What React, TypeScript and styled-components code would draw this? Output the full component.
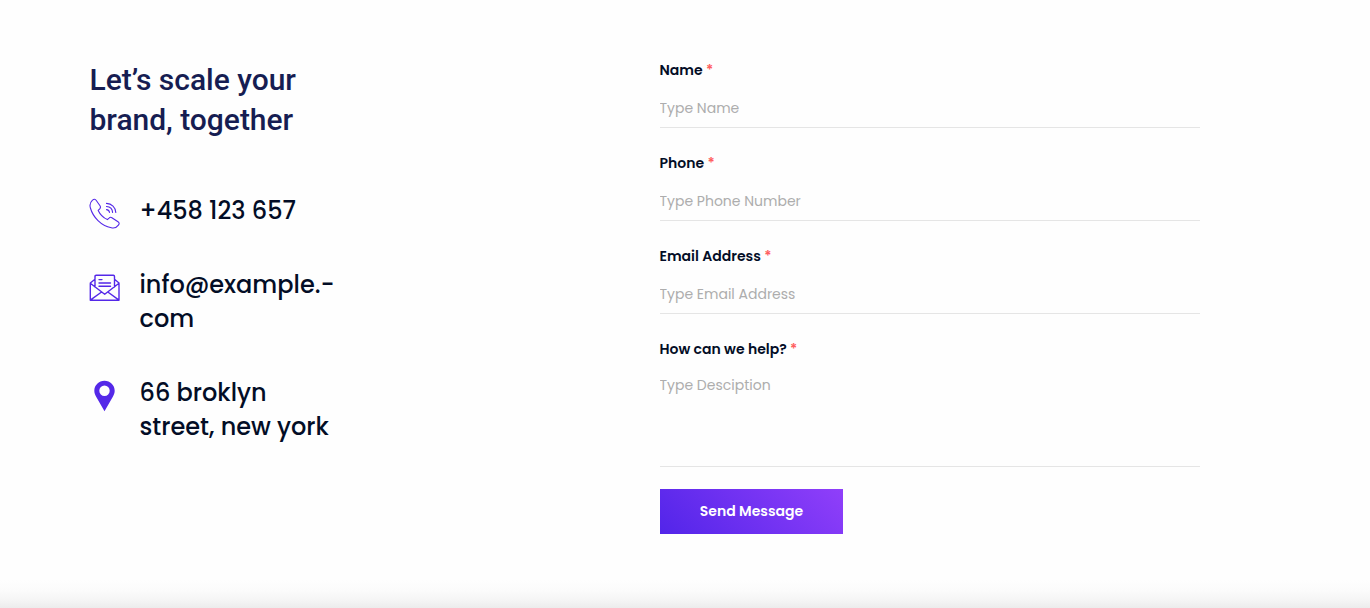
import React from 'react';
import styled, { createGlobalStyle } from 'styled-components';

const GlobalStyle = createGlobalStyle`
  * { box-sizing: border-box; }
  body { margin: 0; background: #fefefe; overflow: hidden; }
`;

const font = `Poppins, Inter, 'Noto Sans', sans-serif`;

const Page = styled.main`
  height: 608px;
  padding: 60px 170px 0 89.5px;
  display: grid;
  grid-template-columns: 250px 540px;
  justify-content: space-between;
  align-items: start;
  color: #030d26;
  font-family: ${font};
  background: linear-gradient(to bottom, #fefefe 580px, #fbfbfb 591px, #f5f5f5 600px, #ececec 608px);
`;

const Heading = styled.h2`
  margin: 0 0 54px;
  font: 500 30px/40px Roboto, sans-serif;
  letter-spacing: -0.02px;
  color: #161d52;
`;

const ContactList = styled.ul`
  list-style: none;
  margin: 0;
  padding: 0;
  display: flex;
  flex-direction: column;
  gap: 40px;
`;

const ContactItem = styled.li`
  display: flex;
  gap: 19.5px;
  svg { flex: none; margin: 4px -1px -2px -0.5px; }
`;

const Line = styled.span`
  display: block;
  font-size: 24px;
  line-height: 34px;
  font-weight: 500;
  white-space: nowrap;
`;

const Form = styled.form`
  display: flex;
  flex-direction: column;
  align-items: flex-start;
`;

const Field = styled.label<{ $last?: boolean }>`
  display: flex;
  flex-direction: column;
  width: 100%;
  margin-bottom: ${(p) => (p.$last ? 22 : 25)}px;
`;

const Caption = styled.span`
  font-size: 14px;
  line-height: 20px;
  font-weight: 600;
  margin-left: -0.5px;
`;

const Star = styled.span`
  color: #ff5e5e;
`;

const control = `
  display: block;
  width: 100%;
  margin: 0;
  border: 0;
  border-bottom: 1px solid #e5e5e5;
  border-radius: 0;
  outline: 0;
  background: transparent;
  color: #030d26;
  font: 400 14px/22px ${font};
  resize: none;
  text-indent: -0.5px;
  &::placeholder { color: #adadad; opacity: 1; }
`;

const Input = styled.input`
  ${control}
  height: 48px;
  padding: 9px 0 0;
`;

const TextArea = styled.textarea`
  ${control}
  height: 108px;
  padding: 15px 0 0;
  overflow: hidden;
`;

const Submit = styled.button`
  width: 183px;
  height: 45px;
  border: 0;
  padding: 0 0 2px;
  color: #fff;
  font: 600 14px/20px ${font};
  background: linear-gradient(45deg, #5225e9, #903ffa);
`;

const PhoneIcon = () => (
  <svg width="32" height="32" viewBox="0 0 32 32" fill="none" stroke="#5428e8" strokeWidth="1.1" strokeLinecap="round" strokeLinejoin="round">
    <path d="M3.300 2.300C5 .9 6.300 1 7.300 2.500l3.700 5.300c.8 1.200.5 2.100-.3 3l-1.500 1.600c2 4.300 5.400 7.400 9.200 9.200l1.600-1.500c.9-.9 1.800-1.100 2.900-.4l6.100 4.100c1.400.9 1.500 2 .4 3.300-1.700 2.300-3.900 3.500-7.100 2.700C12.100 27.900 4 19.200 1.400 10 .5 6.900 1.100 4.300 3.300 2.300Z" />
    <path d="M17.500 5.400c5.200.2 9.100 4.100 9.300 9M17.500 8.500c3.500.2 5.900 2.600 6.100 5.900M17.500 11.600c1.800.2 2.800 1.200 3 2.800" />
  </svg>
);

const MailIcon = () => (
  <svg width="32" height="32" viewBox="0 0 32 32" fill="none" stroke="#5428e8" strokeWidth="1.4" strokeLinecap="round" strokeLinejoin="round">
    <path d="M6 7.300 1.300 11v17.300h28.700V11l-4.500-3.700M6 15V4.400c0-.7.400-1.100 1.100-1.100h17.300c.7 0 1.100.4 1.100 1.100V15M1.300 11.300l14.400 11L30 11.300M1.300 28.100l11.300-8.100M30 28.100 18.800 20" />
    <path d="M10 7.600h3M10 11h11.500M10 14.300h11.500" />
  </svg>
);

const PinIcon = () => (
  <svg width="32" height="32" viewBox="0 0 32 32" fill="#5428e8">
    <path fillRule="evenodd" d="M15.500.8C9.800.8 5.300 5.300 5.300 10.800c0 2.400.9 4.300 2 6.300l8.200 14.100 8.200-14.100c1.100-2 2-3.900 2-6.300C25.700 5.300 21.200.8 15.500.8Zm0 4.800a5.200 5.200 0 1 1 0 10.400 5.200 5.200 0 0 1 0-10.400Z" />
  </svg>
);

const contacts = [
  { Icon: PhoneIcon, lines: ['+458 123 657'] },
  { Icon: MailIcon, lines: ['info@example.-', 'com'] },
  { Icon: PinIcon, lines: ['66 broklyn', 'street, new york'] },
];

const fields = [
  { label: 'Name', hint: 'Type Name' },
  { label: 'Phone', hint: 'Type Phone Number' },
  { label: 'Email Address', hint: 'Type Email Address' },
];

export default function App() {
  return (
    <>
      <GlobalStyle />
      <Page>
        <section>
          <Heading>Let’s scale your<br />brand, together</Heading>
          <ContactList>
            {contacts.map(({ Icon, lines }) => (
              <ContactItem key={lines[0]}>
                <Icon />
                <div>
                  {lines.map((text) => <Line key={text}>{text}</Line>)}
                </div>
              </ContactItem>
            ))}
          </ContactList>
        </section>
        <Form>
          {fields.map((f) => (
            <Field key={f.label}>
              <Caption>{f.label} <Star>*</Star></Caption>
              <Input placeholder={f.hint} />
            </Field>
          ))}
          <Field $last>
            <Caption>How can we help? <Star>*</Star></Caption>
            <TextArea placeholder="Type Desciption" />
          </Field>
          <Submit type="button">Send Message</Submit>
        </Form>
      </Page>
    </>
  );
}
